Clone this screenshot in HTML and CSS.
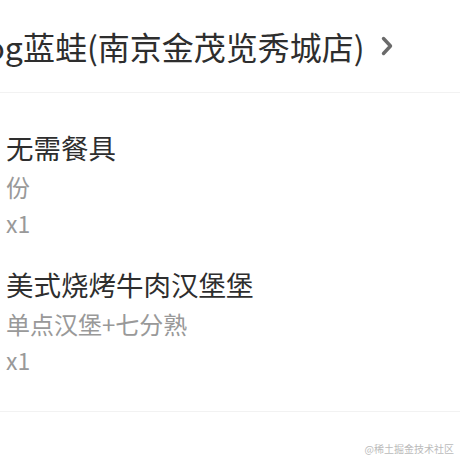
FILE: index.html
```html
<!DOCTYPE html>
<html>
  <head>
    <title>订单详情</title>
    <link rel="stylesheet" href="styles.css">
  </head>
  <body>
    <div class="shop-header">
      <span class="shop-name">Blue Frog蓝蛙(南京金茂览秀城店)</span>
      <svg class="arrow" width="14" height="22" viewBox="0 0 14 22">
        <path d="M3.5 3.5 L10.5 11 L3.5 18.5" fill="none" stroke="#6a6a6a" stroke-width="3.4" stroke-linecap="round" stroke-linejoin="round"/>
      </svg>
    </div>
    <div class="goods-list">
      <div class="goods-item">
        <div class="goods-name">无需餐具</div>
        <div class="goods-spec">份</div>
        <div class="goods-count">x1</div>
      </div>
      <div class="goods-item">
        <div class="goods-name">美式烧烤牛肉汉堡堡</div>
        <div class="goods-spec">单点汉堡+七分熟</div>
        <div class="goods-count">x1</div>
      </div>
    </div>
    <div class="watermark">@稀土掘金技术社区</div>
  </body>
</html>
```

FILE: styles.css
```css
* {
  box-sizing: border-box;
}

body {
  margin: 0;
  width: 460px;
  height: 460px;
  overflow: hidden;
  background-color: #fff;
  color: #333;
  font-family: "Noto Sans CJK SC", "Noto Sans", sans-serif;
  position: relative;
}

.shop-header {
  display: flex;
  align-items: center;
  height: 93px;
  border-bottom: 1px solid #f2f2f2;
  white-space: nowrap;
}

.shop-name {
  font-size: 32px;
  line-height: 40px;
  margin-left: -118px;
  color: #2e2e2e;
}

.arrow {
  margin-left: 15px;
  flex-shrink: 0;
}

.goods-list {
  padding: 36px 0 33px 6px;
  border-bottom: 1px solid #f2f2f2;
  display: flex;
  flex-direction: column;
  gap: 25px;
}

.goods-name {
  font-size: 27.5px;
  line-height: 36px;
  color: #2e2e2e;
}

.goods-spec {
  margin-top: 4px;
  font-size: 24px;
  line-height: 36px;
  color: #999;
}

.goods-count {
  font-size: 23px;
  line-height: 36px;
  color: #999;
}

.watermark {
  position: absolute;
  right: 6px;
  bottom: 4px;
  font-size: 10px;
  color: #bbb;
}
```
